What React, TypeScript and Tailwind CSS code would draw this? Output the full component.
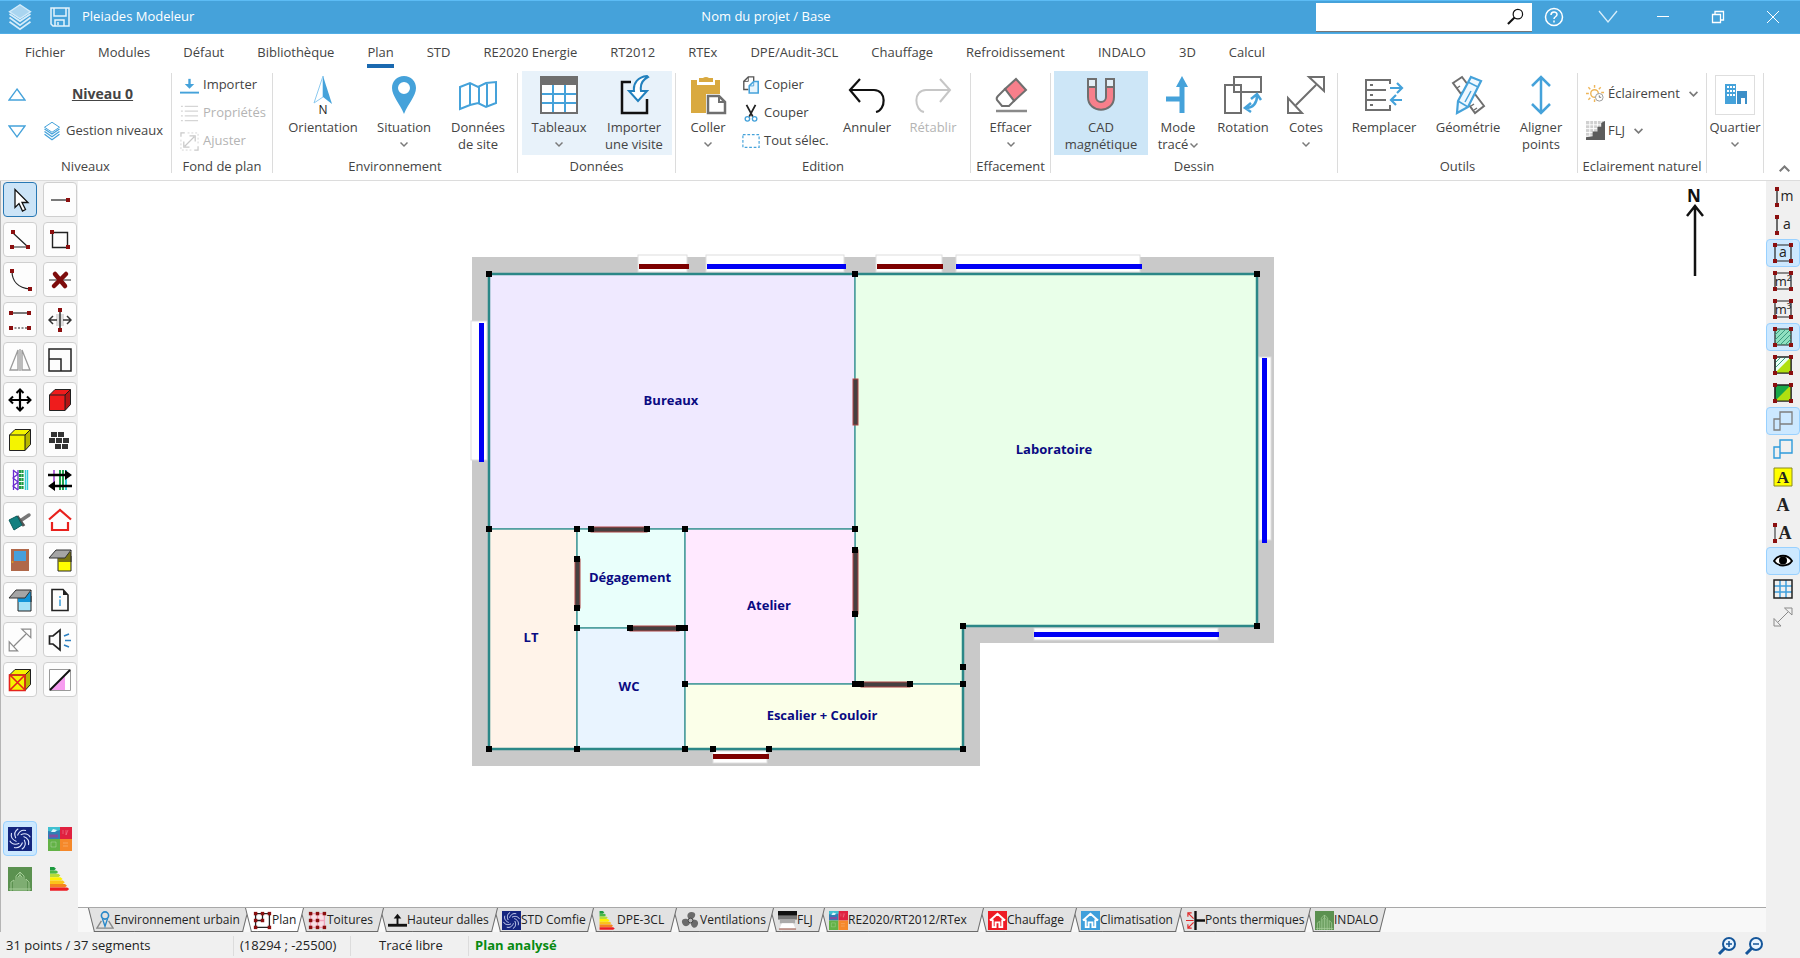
import React from 'react';
import { clsx } from 'clsx';

const BLUE = '#45a2da';
const GREY = '#6f6f6f';
const RED = '#8b0f0f';

type SvgProps = { size?: number; box?: number; className?: string; children: React.ReactNode };

function Svg({ size = 24, box, className, children }: SvgProps) {
  const b = box ?? size;
  return (
    <svg width={size} height={size} viewBox={`0 0 ${b} ${b}`} fill="none" className={clsx('shrink-0', className)} aria-hidden="true">
      {children}
    </svg>
  );
}

function Chevron({ up = false, size = 8 }: { up?: boolean; size?: number }) {
  return (
    <svg width={size} height={size} viewBox="0 0 8 8" fill="none" stroke="#7a7a7a" strokeWidth="1.5" className="shrink-0" aria-hidden="true">
      <path d={up ? 'M.5 6 4 2.5 7.5 6' : 'M.5 2.5 4 6 7.5 2.5'} />
    </svg>
  );
}

/* ---------- shared pictograms ---------- */

const Dots = ({ at }: { at: [number, number][] }) => (
  <>
    {at.map(([x, y]) => (
      <rect key={`${x}-${y}`} x={x - 2} y={y - 2} width="4" height="4" fill={RED} />
    ))}
  </>
);

const CORNERS: [number, number][] = [[3, 3], [19, 3], [3, 19], [19, 19]];

const Comfie = ({ size = 24 }: { size?: number }) => (
  <Svg size={size} box={24}>
    <rect width="24" height="24" fill="#14257f" />
    <g stroke="#dfe6ff" strokeWidth="1.100">
      {[0, 45, 90, 135, 180, 225, 270, 315].map((a) => (
        <path key={a} d="M9.500 8.500C11 4.500 14 2.500 18 3.500" transform={`rotate(${a} 12 12)`} />
      ))}
    </g>
  </Svg>
);

const Re2020 = ({ size = 24 }: { size?: number }) => (
  <Svg size={size} box={24}>
    <rect width="12" height="12" fill="#2f7fb5" />
    <rect x="12" width="12" height="12" fill="#e0213f" />
    <rect y="12" width="12" height="12" fill="#63b246" />
    <rect x="12" y="12" width="12" height="12" fill="#f5882a" />
    <path d="M0 0h12v3L6 5 0 4z" fill="#3fc0d0" />
    <path d="m3 5 2-3 4 1-2 2z" fill="#dff5fa" />
    <path d="M1 9h9" stroke="#7f4fa0" strokeWidth="3" />
    <path d="M15 3v4M18 3v5l2-5M3 15h5v5H3zM15 16h5M15 19h5" stroke="#fff" strokeOpacity=".25" />
  </Svg>
);

const Indalo = ({ size = 24 }: { size?: number }) => (
  <Svg size={size} box={24}>
    <rect width="24" height="24" fill="#5b9150" />
    <path d="M3 24v-9l3-2v11M8 24V9l4-4 4 4v15M10 24V10l2-2 2 2v14M18 24V12l3 3v9M12 5v19M1 22h22" stroke="#a9d09c" strokeWidth=".9" />
  </Svg>
);

const Dpe = ({ size = 24 }: { size?: number }) => (
  <Svg size={size} box={24}>
    {['#1d9a3f', '#4cb848', '#b7dc3a', '#fff200', '#fcc21b', '#f58220', '#ed1c24'].map((c, i) => (
      <path key={c} d={`M2 ${i * 3.4}h${4 + i * 2.2}l2 1.700-2 1.700H2z`} fill={c} />
    ))}
  </Svg>
);

const House = ({ color, size = 19 }: { color: string; size?: number }) => (
  <Svg size={size} box={20}>
    <rect width="20" height="20" fill={color} />
    <path d="m2 10 8-7 8 7M5 9v8h3v-5h4v5h3V9" stroke="#fff" strokeWidth="2" />
  </Svg>
);

const Layers = ({ size, color, fill }: { size: number; color: string; fill: string }) => (
  <Svg size={size} box={24}>
    <path d="m3 16 9 6.500 9-6.500M3 12.500 12 19l9-6.500M3 9.500l9 6 9-6" stroke={color} strokeWidth="1.500" />
    <path d="M12 1.500 21 7.500 12 13.500 3 7.500z" fill={fill} stroke={color} strokeWidth="1.200" />
  </Svg>
);

const DiagArrows = ({ size, color }: { size: number; color: string }) => (
  <Svg size={size} box={40}>
    <g stroke={color} strokeWidth="2">
      <path d="m10 30 20-20M23 2h15v14zM2 23v15h14z" />
    </g>
  </Svg>
);

const Cube = ({ fill, crossed = false }: { fill: string; crossed?: boolean }) => (
  <Svg size={24}>
    <path d="M1.500 7 7 1.500h15.500v15L17 22.500H1.500z" fill={fill} stroke="#222" />
    <path d="M1.500 7H17v15.500M17 7l5.500-5.500" stroke="#222" />
    <path d="M17 7l5.500-5.500v15L17 22.500z" fill="#000" fillOpacity=".25" />
    {crossed && <path d="m2 7 15 15M17 7 2 22M1.500 7H17v15.500H1.500z" stroke="#e5231b" strokeWidth="1.600" />}
  </Svg>
);

const Shade = ({ top, bottom }: { top: string; bottom: string }) => (
  <Svg size={24}>
    <path d="M10 8h13v15H10z" fill={bottom} stroke="#222" />
    <path d="M12 4h11v10H10V9z" fill={top} />
    <path d="M8 2h15l-6 8H1z" fill="#a5a5a5" stroke="#333" />
    <path d="M23 2v12" stroke="#222" />
  </Svg>
);

/* ---------- left toolbox ---------- */

type Tool = { name: string; icon: React.ReactNode; active?: boolean };

const TOOLS: Tool[] = [
  {
    name: 'Sélection',
    active: true,
    icon: (
      <Svg>
        <path d="M7 1.500v18l4-4 3.500 7.500 3-1.500L14 14.500h6z" fill="#fff" stroke="#111" strokeWidth="1.300" />
      </Svg>
    ),
  },
  { name: 'Segment', icon: <Svg><path d="M3 12h17" stroke="#222" strokeWidth="1.200" /><Dots at={[[20, 12]]} /></Svg> },
  { name: 'Segments', icon: <Svg><path d="m5 5 15 14H4" stroke="#222" strokeWidth="1.200" /><Dots at={[[5, 4], [4, 19], [20, 19]]} /></Svg> },
  { name: 'Rectangle', icon: <Svg><path d="M4.500 4.500h15v15h-15z" stroke="#222" strokeWidth="1.400" /><Dots at={[[4, 4], [20, 19]]} /></Svg> },
  { name: 'Arc', icon: <Svg><path d="M4 3c0 10 6 17 18 18" stroke="#222" strokeWidth="1.200" /><Dots at={[[4, 3], [22, 21]]} /></Svg> },
  {
    name: 'Supprimer',
    icon: (
      <Svg>
        <path d="M1 12h22" stroke="#222" />
        <path d="m7 6 10 12M18 6 6 18" stroke="#7d0b0b" strokeWidth="4.500" strokeLinecap="round" />
      </Svg>
    ),
  },
  {
    name: 'Parallèle',
    icon: (
      <Svg>
        <path d="M3 5h18" stroke="#222" strokeWidth="1.200" />
        <path d="M3 20h18" stroke="#222" strokeWidth="1.200" strokeDasharray="2 1.500" />
        <Dots at={[[3, 5], [21, 5], [3, 20], [21, 20]]} />
      </Svg>
    ),
  },
  {
    name: 'Déplacer le segment',
    icon: (
      <Svg>
        <path d="M8 6h8v12H8z" fill="#ddd" />
        <path d="M12 2v20M1 12h8M15 12h8M5 8l-4 4 4 4M19 8l4 4-4 4" stroke="#333" strokeWidth="1.500" />
        <Dots at={[[12, 2], [12, 22]]} />
      </Svg>
    ),
  },
  { name: 'Symétrie', icon: <Svg><path d="M10 2v20H2zM14 2v20h8zM12 1v22" stroke="#9a9a9a" strokeWidth="1.300" /></Svg> },
  { name: 'Échelle', icon: <Svg><path d="M1 1h22v22H1zM1 11h12v12" stroke="#222" strokeWidth="1.500" /></Svg> },
  {
    name: 'Déplacer',
    icon: (
      <Svg>
        <path d="M12 3v18M3 12h18" stroke="#000" strokeWidth="2.200" />
        <path d="m8.500 5 3.500-3.500L15.500 5M8.500 19l3.500 3.500 3.500-3.500M5 8.500 1.500 12 5 15.500M19 8.500l3.500 3.500-3.500 3.500" stroke="#000" strokeWidth="2" />
      </Svg>
    ),
  },
  { name: 'Volume', icon: <Cube fill="#ef1c1c" /> },
  { name: 'Zone', icon: <Cube fill="#f4f400" /> },
  {
    name: 'Murs',
    icon: (
      <Svg>
        <g fill="#333">
          {[[3, 4], [10, 4], [1, 10], [8, 10], [15, 10], [7, 16], [14, 16]].map(([x, y]) => (
            <rect key={`${x}-${y}`} x={x} y={y} width="6" height="5" />
          ))}
        </g>
      </Svg>
    ),
  },
  {
    name: 'Composition',
    icon: (
      <Svg>
        <path d="M5.500 2v20M5 2l5 4-5 4 5 4-5 4 5 4M10 2v20" stroke="#6a2bd0" strokeWidth="1.300" />
        <path d="M12 2v20M14.500 2v20" stroke="#1f9a44" strokeWidth="2.200" strokeDasharray="3 1" />
        <path d="M17.500 2v20M19.500 2v20" stroke="#35c9d6" strokeWidth="1.400" />
      </Svg>
    ),
  },
  {
    name: 'Inverser',
    icon: (
      <Svg>
        <path d="M6 2v20" stroke="#9a3bd0" strokeWidth="1.500" />
        <path d="M12 2v20M15 2v20" stroke="#1fa04c" strokeWidth="2" />
        <path d="M18 2v20" stroke="#35c9d6" strokeWidth="2" />
        <path d="M0 7h20M24 18H4" stroke="#000" strokeWidth="2.600" />
        <path d="m17 2 7 5-7 5zM7 13 0 18l7 5z" fill="#000" />
      </Svg>
    ),
  },
  {
    name: 'Pinceau',
    icon: (
      <Svg>
        <path d="m12 13 9-6" stroke="#777" strokeWidth="3.500" strokeLinecap="round" />
        <path d="m9 8 7 10" stroke="#555" strokeWidth="3" />
        <path d="m1 12 8-4 5 9-8 5z" fill="#128080" stroke="#0b5c5c" />
      </Svg>
    ),
  },
  { name: 'Toiture', icon: <Svg><path d="M1 11.500 12 2l11 9.500M4 14v8h16v-8" stroke="#e8201c" strokeWidth="2.200" /></Svg> },
  {
    name: 'Menuiserie',
    icon: (
      <Svg>
        <rect x="3" y="1" width="18" height="22" fill="#b0684a" />
        <rect x="6" y="3" width="12" height="10" fill="#469fdc" />
        <circle cx="4.500" cy="14" r="1" fill="#e0a020" />
      </Svg>
    ),
  },
  { name: 'Masque', icon: <Shade top="#7a7512" bottom="#ffff00" /> },
  { name: 'Store', icon: <Shade top="#1295d8" bottom="#a4e2f7" /> },
  {
    name: 'Informations',
    icon: (
      <Svg>
        <path d="M4 1.500h11L20 7v15.500H4z" stroke="#222" strokeWidth="1.600" />
        <path d="M15 1.500V7h5z" fill="#222" />
        <path d="M12 8v2M12 11.500V18" stroke={BLUE} strokeWidth="1.600" />
      </Svg>
    ),
  },
  { name: 'Cote', icon: <DiagArrows size={24} color="#8a8a8a" /> },
  {
    name: 'Acoustique',
    icon: (
      <Svg>
        <path d="M1.500 8H5l7-6v20l-7-6H1.500z" stroke="#222" strokeWidth="1.700" />
        <path d="m16 8 5-2M17 12.500h6M16 17l5 2" stroke="#2c7fc0" strokeWidth="1.700" />
      </Svg>
    ),
  },
  { name: 'Exclure', icon: <Cube fill="#f4f400" crossed /> },
  {
    name: 'Transparence',
    icon: (
      <Svg>
        <path d="M1.500 1.500h21v21h-21z" fill="#fff" stroke="#999" />
        <path d="M3 22 17 8v14z" fill="#f79cf0" />
        <path d="M2 22 22 2" stroke="#111" strokeWidth="2" />
      </Svg>
    ),
  },
];

const MODULES: Tool[] = [
  { name: 'STD Comfie', icon: <Comfie />, active: true },
  { name: 'RE2020', icon: <Re2020 /> },
  { name: 'INDALO', icon: <Indalo /> },
  { name: 'DPE', icon: <Dpe /> },
];

function ToolGrid({ tools, plain = false }: { tools: Tool[]; plain?: boolean }) {
  return (
    <div className="grid grid-cols-[34px_34px] gap-x-1.5 gap-y-[5px] pl-0.5">
      {tools.map((t) => (
        <button
          key={t.name}
          type="button"
          aria-label={t.name}
          title={t.name}
          className={clsx(
            'grid h-[35px] place-items-center rounded-sm',
            !plain && 'border',
            t.active && !plain && 'border-[#2878b4] bg-[#cce4f7]',
            t.active && plain && 'border border-[#99d1ff] bg-[#cce8ff]',
            !t.active && !plain && 'border-[#cfcfcf] bg-[#fdfdfd]',
          )}
        >
          {t.icon}
        </button>
      ))}
    </div>
  );
}

/* ---------- right display options ---------- */

const Letter = ({ children, x = 11, y = 16, serif = false, size = 13 }: { children: string; x?: number; y?: number; serif?: boolean; size?: number }) => (
  <text x={x} y={y} fontSize={size} textAnchor="middle" fill="#222" fontWeight={serif ? 700 : 400} className={serif ? "font-['Liberation_Serif',serif]" : "font-['Open_Sans',sans-serif]"}>
    {children}
  </text>
);

const Frame = ({ fill = 'none' }: { fill?: string }) => <path d="M3 3h16v16H3z" stroke="#222" strokeWidth="1.200" fill={fill} />;

const DISPLAY: Tool[] = [
  { name: 'Longueurs', icon: <Svg size={22}><path d="M5 3v16" stroke="#222" strokeWidth="1.300" /><Dots at={[[5, 3], [5, 19]]} /><Letter x={15} y={15} size={14}>m</Letter></Svg> },
  { name: 'Noms des segments', icon: <Svg size={22}><path d="M5 3v16" stroke="#222" strokeWidth="1.300" /><Dots at={[[5, 3], [5, 19]]} /><Letter x={15} y={15} size={14}>a</Letter></Svg> },
  { name: 'Noms des pièces', active: true, icon: <Svg size={22}><Frame /><Dots at={CORNERS} /><Letter y={15} size={14}>a</Letter></Svg> },
  { name: 'Surfaces', icon: <Svg size={22}><Frame /><Dots at={CORNERS} /><Letter>m²</Letter></Svg> },
  { name: 'Volumes', icon: <Svg size={22}><Frame /><Dots at={CORNERS} /><Letter>m³</Letter></Svg> },
  {
    name: 'Hachures',
    active: true,
    icon: <Svg size={22}><Frame fill="#8fe0c0" /><path d="m3 9 6-6M3 14 14 3M3 19 19 3M8 19 19 8M13 19l6-6" stroke="#3a9a80" /><Dots at={CORNERS} /></Svg>,
  },
  {
    name: 'Hachures et zones',
    icon: <Svg size={22}><Frame fill="#e9fff4" /><path d="M3 19 19 3v16z" fill="#b0e010" /><path d="m3 9 6-6M3 14 14 3" stroke="#3a9a80" /><Frame /><Dots at={CORNERS} /></Svg>,
  },
  { name: 'Zones', icon: <Svg size={22}><Frame fill="#18a848" /><path d="M3 19 19 3v16z" fill="#b0e010" /><Frame /><Dots at={CORNERS} /></Svg> },
  { name: 'Niveau inférieur', active: true, icon: <Svg size={22}><path d="M8 2h12v12H8zM2 9h6v11H2z" stroke="#7d7d7d" strokeWidth="1.300" /></Svg> },
  { name: 'Niveau supérieur', icon: <Svg size={22}><path d="M8 2h12v13H8zM2 9h6v11H2z" stroke="#2e9bdb" strokeWidth="1.400" /></Svg> },
  { name: 'Textes surlignés', icon: <Svg size={22}><path d="M2 2h18v18H2z" fill="#ffff00" stroke="#8a8a20" /><Letter y={17} size={17} serif>A</Letter></Svg> },
  { name: 'Textes', icon: <Svg size={22}><Letter y={17} size={18} serif>A</Letter></Svg> },
  { name: 'Textes des segments', icon: <Svg size={22}><path d="M3 3v16" stroke="#222" /><Dots at={[[3, 3], [3, 19]]} /><Letter x={13} y={17} size={18} serif>A</Letter></Svg> },
  {
    name: 'Visibilité',
    active: true,
    icon: (
      <Svg size={22}>
        <path d="M2 11c4-7 14-7 18 0-4 6-14 6-18 0z" fill="#fff" stroke="#000" strokeWidth="1.800" />
        <circle cx="11" cy="10.500" r="4" fill="#000" />
      </Svg>
    ),
  },
  { name: 'Grille', icon: <Svg size={22}><path d="M8 2v18M14 2v18M2 8h18M2 14h18" stroke="#3f9fdb" strokeWidth="1.500" /><path d="M2 2h18v18H2z" stroke="#222" strokeWidth="1.500" /></Svg> },
  { name: 'Cotes', icon: <DiagArrows size={20} color="#8a8a8a" /> },
];

/* ---------- ribbon ---------- */

const MENUS = [
  'Fichier', 'Modules', 'Défaut', 'Bibliothèque', 'Plan', 'STD', 'RE2020 Energie', 'RT2012', 'RTEx',
  'DPE/Audit-3CL', 'Chauffage', 'Refroidissement', 'INDALO', '3D', 'Calcul',
];

function Group({ label, className, children }: { label?: string; className: string; children: React.ReactNode }) {
  return (
    <section className={clsx('flex shrink-0 flex-col pt-px', className)}>
      <div className="flex h-[85px]">{children}</div>
      <p className="text-center leading-5 whitespace-nowrap">{label}</p>
    </section>
  );
}

function Divider() {
  return <span className="mt-[3px] h-[100px] w-px shrink-0 bg-[#dcdcdc]" />;
}

type BigProps = {
  lines: string[];
  className: string;
  drop?: boolean;
  disabled?: boolean;
  children: React.ReactNode;
};

function Big({ lines, className, drop, disabled, children }: BigProps) {
  return (
    <button type="button" disabled={disabled} className={clsx('flex h-[84px] shrink-0 flex-col items-center pt-1 leading-[17px] disabled:text-[#b4b4b4]', className)}>
      <span className="mb-1 grid h-10 place-items-center">{children}</span>
      {lines.map((l, i) => (
        <span key={l} className="flex items-center gap-0.5 whitespace-nowrap">
          {l}
          {drop && i === 1 && <Chevron />}
        </span>
      ))}
      {drop && lines.length === 1 && <span className="mt-1"><Chevron /></span>}
    </button>
  );
}

function Small({ icon, label, disabled }: { icon: React.ReactNode; label: string; disabled?: boolean }) {
  return (
    <button type="button" disabled={disabled} className="flex h-7 items-center gap-1 whitespace-nowrap disabled:text-[#b4b4b4]">
      {icon}
      {label}
    </button>
  );
}

function Ribbon() {
  return (
    <div className="flex h-[111px] shrink-0 border-b border-[#dcdcdc]">
      <Group label="Niveaux" className="w-[171px]">
        <div className="grid w-full grid-cols-[34px_1fr] grid-rows-[37px_37px] items-center pt-1">
          <button type="button" aria-label="Niveau supérieur" className="justify-self-center">
            <Svg size={18}><path d="M9 4 17 15H1z" stroke={BLUE} strokeWidth="1.300" /></Svg>
          </button>
          <button type="button" className="text-[14px] font-bold underline">Niveau 0</button>
          <button type="button" aria-label="Niveau inférieur" className="justify-self-center">
            <Svg size={18}><path d="M1 4h16L9 15z" stroke={BLUE} strokeWidth="1.300" /></Svg>
          </button>
          <button type="button" className="flex items-center gap-1 pl-2 whitespace-nowrap">
            <Layers size={20} color={BLUE} fill="#fff" />
            Gestion niveaux
          </button>
        </div>
      </Group>
      <Divider />

      <Group label="Fond de plan" className="w-[100px]">
        <div className="flex flex-col pl-2">
          <Small label="Importer" icon={<Svg size={19} box={20}><path d="M0 17.500h20" stroke={BLUE} strokeWidth="2" /><path d="M10 3v7" stroke={BLUE} strokeWidth="2.500" /><path d="M5 8.500h10l-5 5z" fill={BLUE} /></Svg>} />
          <Small label="Propriétés" disabled icon={<Svg size={19} box={20}><path d="M1 2.500h2M1 7.500h2M1 12.500h2M1 17.500h2M5 2.500h14M5 7.500h14M5 12.500h14M5 17.500h14" stroke="#d5d5d5" strokeWidth="1.500" /></Svg>} />
          <Small label="Ajuster" disabled icon={<Svg size={19} box={20}><path d="M1 5V1h4M15 19h4v-4M5 15 15 5M10 4h6v6M4 10v6h6" stroke="#c9c9c9" strokeWidth="1.300" /><path d="M8 1h11v11M12 19H1V8" stroke="#d5d5d5" strokeDasharray="2 2" /></Svg>} />
        </div>
      </Group>
      <Divider />

      <Group label="Environnement" className="w-[244px]">
        <Big lines={['Orientation']} className="ml-1.5 w-[88px]">
          <Svg size={40}>
            <path d="M20 1 11 28l9-6z" fill="#fff" stroke="#8ccaf0" />
            <path d="m20 1 9 28-9-7z" fill={BLUE} />
            <text x="20" y="39" fontSize="12" textAnchor="middle" fill="#222">N</text>
          </Svg>
        </Big>
        <Big lines={['Situation']} drop className="w-[74px]">
          <Svg size={40}>
            <path d="M20 1C13 1 8 6 8 13c0 8 8 16 12 26 4-10 12-18 12-26C32 6 27 1 20 1zm0 18a6 6 0 1 1 0-12 6 6 0 0 1 0 12z" fill={BLUE} fillRule="evenodd" />
          </Svg>
        </Big>
        <Big lines={['Données', 'de site']} className="w-[74px]">
          <Svg size={40}><path d="m2 12 10-4 8 4 8-4 10-1v21l-10 4-8-4-8 2-10 4zM12 8v22M21 12v17M29 8v23" stroke={BLUE} strokeWidth="2" /></Svg>
        </Big>
      </Group>
      <Divider />

      <Group label="Données" className="w-[157px]">
        <Big lines={['Tableaux']} drop className="ml-1 w-[74px] bg-[#e8f2fa]">
          <Svg size={40}>
            <path d="M2 2h36v36H2z" fill="#fff" />
            <path d="M14 10v28M26 10v28M2 19h36M2 28h36" stroke={BLUE} strokeWidth="2" />
            <path d="M2 1h36v9H2z" fill={GREY} />
            <path d="M2 2h36v36H2z" stroke={GREY} strokeWidth="2" />
          </Svg>
        </Big>
        <Big lines={['Importer', 'une visite']} className="w-[76px] bg-[#e8f2fa]">
          <Svg size={40}>
            <path d="M17 7H8v31h25V24" stroke="#111" strokeWidth="2.500" />
            <path d="M33 1C24 2 19 8 20 16h-5l9 10 9-10h-6c-1-6 1-11 7-14z" fill="#fff" stroke="#2180bd" strokeWidth="2" />
          </Svg>
        </Big>
      </Group>
      <Divider />

      <Group label="Edition" className="w-[294px]">
        <Big lines={['Coller']} drop className="ml-1 w-[56px]">
          <Svg size={40}>
            <path d="M3 5h6v5h18V5h5v14H18v19H3z" fill="#d9a940" />
            <path d="M11 3h4a4 3 0 0 1 6 0h4v4H11z" fill="#d9a940" />
            <path d="M20 21h11l6 6v11H20z" fill="#fff" stroke={GREY} strokeWidth="2.500" />
            <path d="M31 21v6h6" stroke={GREY} strokeWidth="2" />
          </Svg>
        </Big>
        <div className="flex w-[98px] flex-col pl-1.5">
          <Small label="Copier" icon={<Svg size={18} box={20}><path d="M7 15H2V6l5-5h6v5" stroke="#555" strokeWidth="1.500" /><path d="M7 1v5H2" stroke="#555" /><path d="M18 6v13H8v-8l5-5z" fill="#e8f5fd" stroke={BLUE} strokeWidth="1.700" /><path d="M13 6v5H8" stroke={BLUE} /></Svg>} />
          <Small label="Couper" icon={<Svg size={18} box={20}><path d="m5 1 7 13M15 1 8 14" stroke="#222" strokeWidth="2" /><circle cx="6" cy="16.500" r="2.500" stroke={BLUE} strokeWidth="1.500" /><circle cx="14" cy="16.500" r="2.500" stroke={BLUE} strokeWidth="1.500" /></Svg>} />
          <Small label="Tout sélec." icon={<Svg size={18} box={20}><path d="M1 3h18v14H1z" stroke={BLUE} strokeWidth="1.300" strokeDasharray="3 2" /></Svg>} />
        </div>
        <Big lines={['Annuler']} className="w-[66px]">
          <Svg size={40}><path d="M13 4 3 15l10 12M3 15h24c13 0 12 20 2 22" stroke="#111" strokeWidth="2.200" /></Svg>
        </Big>
        <Big lines={['Rétablir']} disabled className="w-[66px]">
          <Svg size={40}><path d="m27 4 10 11-10 12M37 15H13C0 15 1 35 11 37" stroke="#c6c6c6" strokeWidth="2" /></Svg>
        </Big>
      </Group>
      <Divider />

      <Group label="Effacement" className="w-[79px]">
        <Big lines={['Effacer']} drop className="w-full">
          <Svg size={40}>
            <path d="m14 14 11-10 10 11-12 11z" fill="#f77f8b" stroke={GREY} strokeWidth="2" />
            <path d="m14 14 9 12-5 5H11l-5-6c-1-2 0-3 1-4z" fill="#fff" stroke={GREY} strokeWidth="2" />
            <path d="M5 36h31" stroke="#8a8a8a" strokeWidth="2.500" />
          </Svg>
        </Big>
      </Group>
      <Divider />

      <Group label="Dessin" className="w-[286px]">
        <Big lines={['CAD', 'magnétique']} className="ml-[3px] w-[94px] bg-[#cde6f7]">
          <Svg size={40}>
            <path d="M7 4h8v18a5 5 0 0 0 10 0V4h8v18c0 17-26 17-26 0z" fill="#f77f8b" stroke={GREY} strokeWidth="2" />
            <path d="M7 4h8v8H7zM25 4h8v8h-8z" fill="#e3eef5" stroke={GREY} strokeWidth="2" />
          </Svg>
        </Big>
        <Big lines={['Mode', 'tracé']} drop className="w-[60px]">
          <Svg size={40}><path d="M24 10v28M8 24h16" stroke={BLUE} strokeWidth="5" /><path d="M24 1 30 12H18z" fill={BLUE} /></Svg>
        </Big>
        <Big lines={['Rotation']} className="w-[70px]">
          <Svg size={40}>
            <path d="M11 2h27v15H11zM2 10h16v28H2z" stroke={GREY} strokeWidth="2" />
            <path d="M23 33c7 0 11-5 11-12M28 28l-6 5 6 4M28 24l6-5 4 6" stroke={BLUE} strokeWidth="2.500" />
          </Svg>
        </Big>
        <Big lines={['Cotes']} drop className="w-[56px]">
          <DiagArrows size={40} color={GREY} />
        </Big>
      </Group>
      <Divider />

      <Group label="Outils" className="w-[239px]">
        <Big lines={['Remplacer']} className="ml-1 w-[84px]">
          <Svg size={40}>
            <path d="M26 9V5H2v30h24v-5M2 15h20M2 25h20" stroke={GREY} strokeWidth="2" />
            <path d="M6 10h3M6 20h3M6 30h3" stroke={GREY} strokeWidth="2" />
            <path d="M26 13h11M33 8l5 5-5 5M38 25H27M32 20l-5 5 5 5" stroke={BLUE} strokeWidth="2.200" />
          </Svg>
        </Big>
        <Big lines={['Géométrie']} className="w-[84px]">
          <Svg size={40}>
            <path d="m5 8 9-6 22 29-9 7z" fill="#fff" stroke={GREY} strokeWidth="2" />
            <path d="m9 13 3-2M13 18l4-3M23 31l3-2M26 35l3-2" stroke={GREY} strokeWidth="1.500" />
            <path d="M23 2 33 6 20 32 9 38l1-12z" fill="#eef8ff" stroke={BLUE} strokeWidth="2.200" />
            <path d="m20 7 10 5M10 26l10 6M23 16l-6 11" stroke={BLUE} strokeWidth="1.500" />
          </Svg>
        </Big>
        <Big lines={['Aligner', 'points']} className="w-[62px]">
          <Svg size={40}><path d="M20 2v36M11 11l9-9 9 9M11 29l9 9 9-9" stroke={BLUE} strokeWidth="2.500" /></Svg>
        </Big>
      </Group>
      <Divider />

      <Group label="Eclairement naturel" className="w-[128px]">
        <div className="flex flex-col pt-1 pl-2">
          <button type="button" className="flex h-[37px] items-center gap-[3px]">
            <Svg size={19} box={20}>
              <g stroke="#eeb558" strokeWidth="1.500">
                <circle cx="9" cy="10" r="4" />
                <path d="M9 1v3M9 16v3M0 10h3M2.500 3.500l2 2M15.500 3.500l-2 2M2.500 16.500l2-2M16 9h3" />
              </g>
              <circle cx="14" cy="14" r="4" fill="#fff" stroke="#999" />
              <path d="M14 12v2h2" stroke="#777" />
            </Svg>
            Éclairement
            <span className="ml-1.5"><Chevron size={9} /></span>
          </button>
          <button type="button" className="flex h-[37px] items-center gap-[3px]">
            <Svg size={19} box={20}>
              <rect width="20" height="20" fill="#d0d0d0" />
              <path d="M4 0v20M8 0v20M12 0v20M16 0v20M0 4h20M0 8h20M0 12h20M0 16h20" stroke="#fff" />
              <path d="M20 0v20H0v-3l7-1v-5h5V6h4V2z" fill="#5c5c5c" />
            </Svg>
            FLJ
            <span className="ml-1.5"><Chevron size={9} /></span>
          </button>
        </div>
      </Group>
      <Divider />

      <Group className="w-[56px]">
        <Big lines={['Quartier']} drop className="w-full">
          <span className="grid size-10 place-items-center border border-[#dedede]">
            <Svg size={26}>
              <path d="M3 2h11v20H3z" fill={BLUE} />
              <path d="M15 9h10v13h-2v-6h-4v6h-4z" fill="#3c8fc8" />
              <path d="M5 5h2M8 5h2M11 5h2M5 9h2M8 9h2M11 9h2M5 13h2M8 13h2M11 13h2" stroke="#fff" strokeWidth="2" />
            </Svg>
          </span>
        </Big>
      </Group>
      <Divider />
      <button type="button" aria-label="Réduire le ruban" className="mr-2.5 mb-1.5 ml-auto self-end"><Chevron up size={11} /></button>
    </div>
  );
}

/* ---------- floor plan ---------- */

const ROOMS = [
  { name: 'Bureaux', d: 'M489 274H855V529H489z', fill: '#efe9ff', x: 671, y: 400 },
  { name: 'Laboratoire', d: 'M855 274H1257V626H963V684H855z', fill: '#e9ffe9', x: 1054, y: 449 },
  { name: 'LT', d: 'M489 529H577V749H489z', fill: '#fff3e9', x: 531, y: 637 },
  { name: 'Dégagement', d: 'M577 529H685V628H577z', fill: '#e9fffb', x: 630, y: 577 },
  { name: 'WC', d: 'M577 628H685V749H577z', fill: '#e9f4ff', x: 629, y: 686 },
  { name: 'Atelier', d: 'M685 529H855V684H685z', fill: '#ffe9ff', x: 769, y: 605 },
  { name: 'Escalier + Couloir', d: 'M685 684H963V749H685z', fill: '#fbffe9', x: 822, y: 715 },
];

// white reveal, then the coloured joinery bar: x, y, width, height
const OPENINGS = [
  { frame: [638, 255, 49, 17], bar: [639, 264, 50, 5], color: '#7d0000' },
  { frame: [706, 255, 138, 17], bar: [707, 264, 139, 5], color: '#0000f5' },
  { frame: [876, 255, 66, 17], bar: [877, 264, 66, 5], color: '#7d0000' },
  { frame: [956, 255, 184, 17], bar: [956, 264, 186, 5], color: '#0000f5' },
  { frame: [471, 321, 16, 139], bar: [479, 323, 5, 139], color: '#0000f5' },
  { frame: [1259, 357, 12, 183], bar: [1262, 358, 5, 185], color: '#0000f5' },
  { frame: [1034, 628, 184, 12], bar: [1034, 632, 185, 5], color: '#0000f5' },
  { frame: [713, 751, 54, 12], bar: [713, 754, 56, 5], color: '#7d0000' },
];

const DOORS = [
  [591, 527, 56, 5], [575, 559, 5, 49], [630, 626, 49, 5], [853, 550, 5, 64], [853, 379, 5, 46], [861, 682, 49, 5],
];

const NODES = [
  [489, 274], [855, 274], [1257, 274], [489, 529], [577, 529], [591, 529], [647, 529], [685, 529], [855, 529],
  [577, 559], [577, 608], [577, 628], [630, 628], [679, 628], [685, 628], [855, 550], [855, 614], [685, 684],
  [855, 684], [861, 684], [910, 684], [963, 684], [963, 667], [963, 626], [1257, 626], [489, 749], [577, 749],
  [685, 749], [713, 749], [769, 749], [963, 749],
];

function FloorPlan() {
  return (
    <svg viewBox="78 181 1688 726" className="block h-full w-full" role="img" aria-label="Plan du niveau 0">
      <path d="M472 257H1274V643H980V766H472z" fill="#c9c9c9" />
      {OPENINGS.map((o) => (
        <g key={o.frame.join()}>
          <rect x={o.frame[0]} y={o.frame[1]} width={o.frame[2]} height={o.frame[3]} fill="#fff" stroke="#dedede" />
          <rect x={o.bar[0]} y={o.bar[1]} width={o.bar[2]} height={o.bar[3]} fill={o.color} />
        </g>
      ))}
      {ROOMS.map((r) => (
        <path key={r.name} d={r.d} fill={r.fill} stroke="#4a9c9c" strokeWidth="1.500" />
      ))}
      <path d="M489 274H1257V626H963V749H489z" fill="none" stroke="#2b8787" strokeWidth="2.500" />
      {DOORS.map(([x, y, w, h]) => (
        <rect key={`${x}-${y}`} x={x} y={y} width={w} height={h} fill="#464040" stroke="#b04545" />
      ))}
      {NODES.map(([x, y]) => (
        <rect key={`${x}-${y}`} x={x - 3} y={y - 3} width="6" height="6" fill="#000" />
      ))}
      <g fill="#0a0a82" fontSize="13" fontWeight="700" textAnchor="middle" dominantBaseline="central">
        {ROOMS.map((r) => (
          <text key={r.name} x={r.x} y={r.y}>{r.name}</text>
        ))}
      </g>
      <text x="1694" y="202" fontSize="17" fontWeight="700" textAnchor="middle" fill="#111">N</text>
      <path d="M1695 276V207M1687 216l8-10 8 10" fill="none" stroke="#111" strokeWidth="2.500" />
    </svg>
  );
}

/* ---------- bottom tabs ---------- */

const TABS = [
  {
    label: 'Environnement urbain',
    width: 'w-[157px]',
    icon: <Svg size={18} box={20}><path d="m6 11-5 8h18l-5-8" stroke="#888" strokeWidth="1.500" /><circle cx="10" cy="5" r="4" stroke="#2a88c8" strokeWidth="1.800" /><path d="m7 8 3 9 3-9" stroke="#2a88c8" strokeWidth="1.500" /></Svg>,
  },
  {
    label: 'Plan',
    width: 'w-[55px]',
    icon: <Svg size={19} box={22}><path d="M3 3h16v16H3zM3 11h8V3" stroke="#222" strokeWidth="1.500" /><Dots at={[...CORNERS, [11, 3], [11, 11], [3, 11]]} /></Svg>,
  },
  {
    label: 'Toitures',
    width: 'w-[80px]',
    icon: <Svg size={19} box={22}><path d="M3 3h16v16H3zM11 3v16M3 11h16" stroke="#f0a0b8" strokeWidth="1.500" fill="#f7dfe6" /><Dots at={[...CORNERS, [11, 3], [11, 11], [3, 11], [11, 19]]} /></Svg>,
  },
  { label: 'Hauteur dalles', width: 'w-[114px]', icon: <Svg size={19} box={20}><path d="M0 15h20" stroke="#111" strokeWidth="3" /><path d="M10 14V7" stroke="#111" strokeWidth="2" /><path d="m10 3 4 5H6z" fill="#111" /></Svg> },
  { label: 'STD Comfie', width: 'w-[96px]', icon: <Comfie size={19} /> },
  { label: 'DPE-3CL', width: 'w-[83px]', icon: <Dpe size={19} /> },
  {
    label: 'Ventilations',
    width: 'w-[97px]',
    icon: (
      <Svg size={19} box={20}>
        {[0, 120, 240].map((a) => (
          <path key={a} d="M10 10C5 7 6 1 11 1s6 5-1 9z" fill="#6a6a6a" transform={`rotate(${a} 10 10)`} />
        ))}
        <circle cx="10" cy="10" r="2.500" fill="#bbb" stroke="#444" />
      </Svg>
    ),
  },
  { label: 'FLJ', width: 'w-[51px]', icon: <Svg size={19} box={20}><path d="M0 0h20v5H0z" fill="#111" /><path d="M0 5h20v4H0z" fill="#777" /><path d="M2 9h16v4H2z" fill="#aaa" /><path d="M4 13h12l2 5H2z" fill="#fff" /><path d="M1 19h18" stroke="#a05040" /></Svg> },
  { label: 'RE2020/RT2012/RTex', width: 'w-[159px]', icon: <Re2020 size={19} /> },
  { label: 'Chauffage', width: 'w-[93px]', icon: <House color="#ee1b24" /> },
  { label: 'Climatisation', width: 'w-[105px]', icon: <House color="#3f9fdb" /> },
  { label: 'Ponts thermiques', width: 'w-[129px]', icon: <Svg size={19} box={20}><path d="M10 0v20M10 10h10" stroke="#111" strokeWidth="2.500" /><path d="m8 8-6-6M8 12l-6 6M2 6V2h4M2 14v4h4M0 10h8" stroke="#e02828" strokeWidth="1.200" /></Svg> },
  { label: 'INDALO', width: 'w-[75px]', icon: <Indalo size={19} /> },
];

function BottomTabs() {
  return (
    <div className="relative isolate flex h-[25px] shrink-0 border-t border-[#a8a8a8] bg-[#f8f8f8] pl-2.5 text-[12px]" role="tablist">
      {TABS.map((t, i) => {
        const selected = t.label === 'Plan';
        const bg = selected ? 'bg-white' : 'bg-[#e2e2e2]';
        return (
          <button
            key={t.label}
            type="button"
            role="tab"
            aria-selected={selected}
            className={clsx('relative flex h-6 shrink-0 items-center pl-2 text-[#222]', t.width)}
            style={{ zIndex: selected ? 50 : TABS.length - i }}
          >
            <span className={clsx('absolute inset-y-0 left-0 w-1/2 origin-top skew-x-[14deg] border-b border-l border-[#6a6a6a]', bg)} />
            <span className={clsx('absolute inset-y-0 -right-1 left-1/3 origin-top -skew-x-[14deg] border-r border-b border-[#6a6a6a]', bg)} />
            <span className="relative flex items-center whitespace-nowrap">
              {t.icon}
              {t.label}
            </span>
          </button>
        );
      })}
    </div>
  );
}

const ZoomIcon = ({ out = false }: { out?: boolean }) => (
  <Svg size={20}>
    <circle cx="12" cy="8" r="6" stroke="#15569a" strokeWidth="2" fill="#eaf5ff" />
    <path d="m8 12-6 6" stroke="#15569a" strokeWidth="3" />
    <path d={out ? 'M9 8h6' : 'M9 8h6M12 5v6'} stroke="#15569a" strokeWidth="1.500" />
  </Svg>
);

export default function App() {
  return (
    <div className="flex h-screen min-h-[720px] flex-col overflow-hidden bg-white font-['Open_Sans',sans-serif] text-[13px] text-[#444]">
      {/* title bar */}
      <header className="flex h-[34px] shrink-0 items-center border-t border-b border-t-[#5cbcf5] border-b-[#52aee6] bg-[#45a2da] text-white">
        <div className="flex w-[216px] items-center pl-1.5">
          <Layers size={28} color="#d5ecfa" fill="#a9d5f0" />
          <button type="button" aria-label="Enregistrer" className="mr-3 ml-4">
            <Svg size={20}>
              <path d="M1 1h18v18H3l-2-2zM4 1v8h12V1M5 19v-6h9v6M8 15v3" stroke="#e4f3fc" strokeWidth="1.500" />
            </Svg>
          </button>
          <span>Pleiades Modeleur</span>
        </div>
        <h1 className="flex-1 text-center">Nom du projet / Base</h1>
        <label className="flex h-[29px] w-[216px] items-center border-b border-[#777] bg-white pr-2 text-[#222]">
          <input type="search" aria-label="Rechercher" className="min-w-0 flex-1 bg-transparent px-2 outline-none" />
          <Svg size={17} box={18}>
            <circle cx="11.500" cy="6.500" r="5" stroke="#111" strokeWidth="1.300" />
            <path d="m8 10-7 7" stroke="#111" strokeWidth="2.200" />
          </Svg>
        </label>
        <button type="button" aria-label="Aide" className="mr-1 grid w-11 place-items-center">
          <Svg size={20}>
            <circle cx="10" cy="10" r="8.500" stroke="#fff" strokeWidth="1.500" />
            <path d="M7 8c0-4 6-4 6-.5 0 2.500-3 2-3 4.500M10 13.500v2" stroke="#fff" strokeWidth="1.500" />
          </Svg>
        </button>
        <button type="button" aria-label="Options" className="grid w-[55px] place-items-center"><Svg size={20}><path d="m1 4 9 11 9-11" stroke="#d8eefb" strokeWidth="1.300" /></Svg></button>
        <button type="button" aria-label="Réduire" className="grid w-[55px] place-items-center"><Svg size={14}><path d="M1 6.500h12" stroke="#fff" /></Svg></button>
        <button type="button" aria-label="Restaurer" className="grid w-[55px] place-items-center"><Svg size={14}><path d="M1.500 4.500h8v8h-8zM4 4V1.500h8.500V10H10" stroke="#fff" strokeWidth="1.300" /></Svg></button>
        <button type="button" aria-label="Fermer" className="grid w-[55px] place-items-center"><Svg size={14}><path d="m1 1 12 12M13 1 1 13" stroke="#fff" /></Svg></button>
      </header>

      {/* menus */}
      <nav className="flex h-9 shrink-0 gap-[33px] pl-[25px]">
        {MENUS.map((m) => (
          <a
            key={m}
            href="#"
            className={clsx('h-[34px] border-b-4 pt-2 leading-5 whitespace-nowrap', m === 'Plan' ? 'border-[#1a69b0]' : 'border-transparent')}
          >
            {m}
          </a>
        ))}
      </nav>

      <Ribbon />

      {/* workspace */}
      <main className="flex min-h-0 flex-1">
        <aside className="flex w-[78px] shrink-0 flex-col justify-between border-l border-[#b5b5b5] bg-[#f0f0f0] pt-px pb-9">
          <ToolGrid tools={TOOLS} />
          <ToolGrid tools={MODULES} plain />
        </aside>
        <div className="flex min-w-0 flex-1 flex-col">
          <div className="min-h-0 flex-1 bg-white">
            <FloorPlan />
          </div>
          <BottomTabs />
        </div>
        <aside className="flex w-[34px] shrink-0 flex-col bg-[#f0f0f0] pt-0.5">
          {DISPLAY.map((t) => (
            <button
              key={t.name}
              type="button"
              aria-label={t.name}
              title={t.name}
              className={clsx('grid h-7 place-items-center border', t.active ? 'rounded-sm border-[#99d1ff] bg-[#cce8ff]' : 'border-transparent')}
            >
              {t.icon}
            </button>
          ))}
        </aside>
      </main>

      {/* status bar */}
      <footer className="flex h-[26px] shrink-0 items-center bg-[#f0f0f0] pt-0.5 text-[#222]">
        <span className="w-[234px] border-r border-[#dcdcdc] pl-1.5">31 points / 37 segments</span>
        <span className="w-[117px] border-r border-[#dcdcdc] pl-1.5">(18294 ; -25500)</span>
        <span className="w-[118px] border-r border-[#dcdcdc] pl-7">Tracé libre</span>
        <span className="pl-1.5 font-bold text-[#078a12]">Plan analysé</span>
        <span className="mr-9 ml-auto flex gap-[7px]">
          <button type="button" aria-label="Zoom avant"><ZoomIcon /></button>
          <button type="button" aria-label="Zoom arrière"><ZoomIcon out /></button>
        </span>
      </footer>
    </div>
  );
}
